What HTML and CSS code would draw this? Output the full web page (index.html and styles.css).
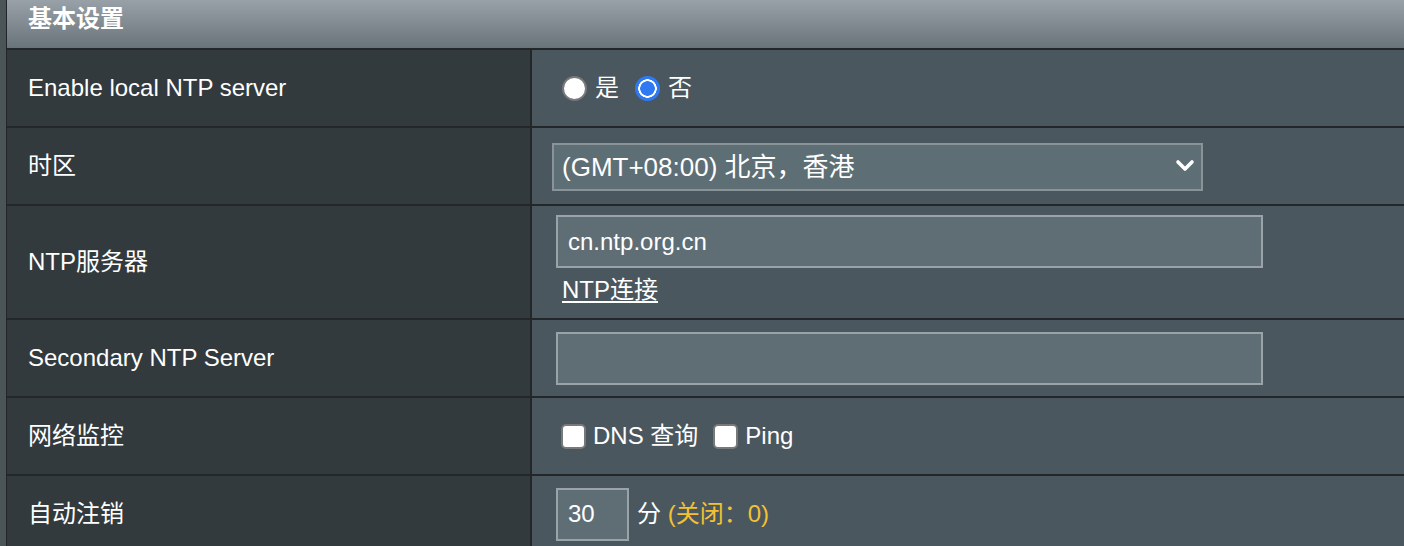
FILE: index.html
```html
<!DOCTYPE html>
<html lang="zh-CN">
<head>
<meta charset="utf-8">
<title>基本设置</title>
<link rel="stylesheet" href="styles.css">
</head>
<body>
<div class="page">
  <div class="panel">
    <div class="head">基本设置</div>

    <div class="row">
      <div class="label">Enable local NTP server</div>
      <div class="field radios">
        <input class="radio" type="radio" name="ntp" id="ntp-yes"><label class="opt opt-yes" for="ntp-yes">是</label>
        <input class="radio" type="radio" name="ntp" id="ntp-no" checked><label class="opt" for="ntp-no">否</label>
      </div>
    </div>

    <div class="row">
      <div class="label">时区</div>
      <div class="field sel-field">
        <div class="select-wrap">
          <select class="select">
            <option>(GMT+08:00) 北京，香港</option>
          </select>
          <svg class="chev" width="20" height="14" viewBox="0 0 20 14"><path d="M3 3 L10 10 L17 3" fill="none" stroke="#fff" stroke-width="3.6" stroke-linecap="round" stroke-linejoin="round"/></svg>
        </div>
      </div>
    </div>

    <div class="row row-tall">
      <div class="label">NTP服务器</div>
      <div class="field stack">
        <input class="text wide" type="text" value="cn.ntp.org.cn">
        <a class="link" href="#">NTP连接</a>
      </div>
    </div>

    <div class="row">
      <div class="label">Secondary NTP Server</div>
      <div class="field txt-field">
        <input class="text wide" type="text" value="">
      </div>
    </div>

    <div class="row">
      <div class="label">网络监控</div>
      <div class="field checks">
        <input class="check" type="checkbox" id="c-dns"><label class="opt opt-dns" for="c-dns">DNS 查询</label>
        <input class="check" type="checkbox" id="c-ping"><label class="opt" for="c-ping">Ping</label>
      </div>
    </div>

    <div class="row">
      <div class="label">自动注销</div>
      <div class="field txt-field">
        <input class="text short" type="text" value="30">
        <span class="unit">分 <span class="hint">(关闭：0)</span></span>
      </div>
    </div>
  </div>
</div>
</body>
</html>
```

FILE: styles.css
```css
* { box-sizing: border-box; }

html, body {
  margin: 0;
  padding: 0;
  height: 100%;
  overflow: hidden;
}

body {
  font-family: "Liberation Sans", Arial, "Noto Sans CJK SC", sans-serif;
  font-size: 24px;
  color: #ffffff;
  background: #4b5558;
}

.page {
  display: flex;
  height: 100%;
  padding-left: 6px;
  background: #4b5558;
}

.panel {
  flex: 1;
  border-left: 1px solid #222628;
  background: #4b575e;
  min-width: 0;
}

.head {
  height: 50px;
  padding: 5px 0 0 21px;
  line-height: 28px;
  font-weight: bold;
  color: #ffffff;
  background: linear-gradient(#98a1a7, #69747a);
  border-bottom: 2px solid #23272a;
}

.row {
  display: grid;
  grid-template-columns: 525px 1fr;
  height: 78px;
  border-bottom: 2px solid #23272a;
}

.row-tall { height: 114px; }

.label {
  display: flex;
  align-items: center;
  padding-left: 21px;
  background: #323a3e;
  border-right: 2px solid #23272a;
  line-height: 28px;
}

.field {
  display: flex;
  align-items: center;
  line-height: 28px;
}

/* radios */
.radios { padding-left: 30px; }

.radio {
  appearance: none;
  -webkit-appearance: none;
  width: 25px;
  height: 25px;
  margin: 0 8px 0 0;
  border-radius: 50%;
  background: #ffffff;
  border: 2px solid #77797b;
  flex: none;
}

.radio:checked {
  border: none;
  background: radial-gradient(circle, #2f79f3 0 7px, #ffffff 7.5px 9px, #2f79f3 9.5px);
}

.opt { white-space: nowrap; }
.opt-yes { margin-right: 16px; }

/* select */
.sel-field { padding-left: 20px; }

.select-wrap {
  position: relative;
  width: 651px;
  height: 48px;
  margin-top: 2px;
}

.select {
  appearance: none;
  -webkit-appearance: none;
  width: 100%;
  height: 100%;
  margin: 0;
  padding: 0 0 0 8px;
  font-family: inherit;
  font-size: 26px;
  color: #ffffff;
  background: #5e6e75;
  border: 2px solid #8a9397;
  border-radius: 0;
  outline: none;
}

.chev {
  position: absolute;
  right: 8px;
  top: 16px;
}

/* text inputs */
.text {
  font: inherit;
  color: #ffffff;
  background: #5f6e75;
  border: 2px solid #9aa4a8;
  border-radius: 0;
  outline: none;
  margin: 0;
  height: 53px;
  padding: 0 0 0 10px;
}

.wide { width: 707px; }

.short {
  width: 73px;
  padding-left: 10px;
}

.txt-field { padding-left: 24px; }

.stack {
  flex-direction: column;
  align-items: flex-start;
  padding: 9px 0 0 24px;
}

.link {
  color: #ffffff;
  text-decoration: underline;
  text-underline-offset: 3px;
  margin: 8px 0 0 6px;
  line-height: 28px;
}

/* checkboxes */
.checks { padding-left: 29px; }

.check {
  appearance: none;
  -webkit-appearance: none;
  width: 25px;
  height: 25px;
  margin: 0 7px 0 0;
  background: #ffffff;
  border: 2px solid #77797b;
  border-radius: 5px;
  flex: none;
}

.opt-dns { margin-right: 15px; }

.unit {
  margin-left: 8px;
  white-space: nowrap;
}

.hint { color: #f2c232; }
```
